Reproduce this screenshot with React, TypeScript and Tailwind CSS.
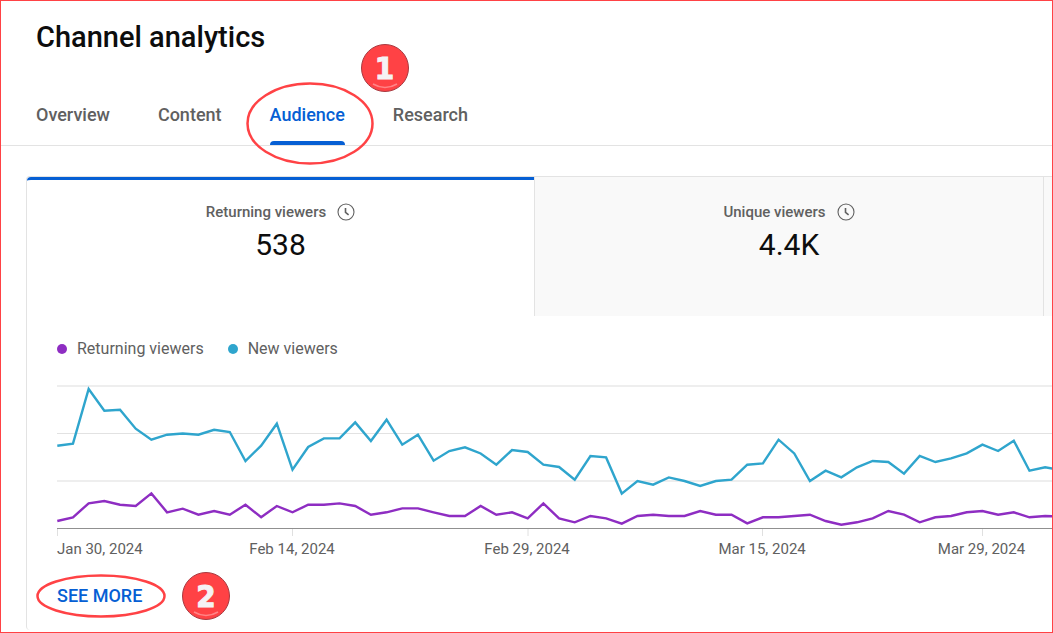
const newViewers = [
  445.8, 443.6, 389, 410.7, 409.7, 428.7, 439.7, 434.7, 433.5, 434.7, 429.8, 432, 461, 445.6, 423.7, 469.7,
  447, 438.4, 438.4, 422.4, 441, 419.7, 444.7, 434.7, 460.7, 451, 447.3, 453.5, 464.7, 450, 452, 464.7,
  467, 479.7, 456, 457.4, 493.6, 481, 484.7, 477.4, 481, 486, 481, 479.7, 464.7, 463.4, 439.7, 453.4,
  481, 470.7, 477.3, 467.3, 461, 462, 473.6, 456, 462, 458.4, 453.4, 444.7, 451, 440.7, 470.7, 467.3, 470,
];

const returningViewers = [
  521, 517.3, 503.3, 501, 504.7, 506, 493.4, 512.3, 508.7, 514.7, 511, 514.7, 504.7, 517.3, 506, 512.3,
  504.7, 504.7, 503.4, 506, 514.7, 512.3, 508.4, 508.4, 512.3, 516, 516, 506, 514.7, 512.3, 518.4, 503.4,
  518.4, 522.3, 516, 518.4, 523.6, 516, 514.7, 516, 516, 511, 514.7, 514.7, 523.4, 517.3, 517.3, 516,
  514.7, 521, 524.7, 522.3, 518.3, 511, 514.7, 522.3, 517.3, 516, 512.3, 511, 514.7, 512.3, 517.3, 516, 516.5,
];

const toPoints = (values: number[]) =>
  values.map((v, i) => `${(0.3 + i * 15.68).toFixed(2)},${(v - 380).toFixed(1)}`).join(" ");

const tabs = ["Overview", "Content", "Audience", "Research"];

function ClockIcon() {
  return (
    <svg width="18" height="18" viewBox="0 0 18 18" fill="none" stroke="#606060" aria-hidden="true">
      <circle cx="9" cy="9" r="8" strokeWidth="1.1" />
      <path d="M8.5 5v4.4l3.1 2.5" strokeWidth="1.6" />
    </svg>
  );
}

function Badge({ label, className }: { label: string; className: string }) {
  return (
    <span
      className={`absolute flex size-12 items-center justify-center rounded-full border border-[#a83a40] bg-[#ff4245] font-['DejaVu_Sans_Condensed','DejaVu_Sans',sans-serif] text-[31px] leading-8 font-bold text-[#f5f3f5] [-webkit-text-stroke:1px_#f5f3f5] ${className}`}
    >
      {label}
      <svg className="absolute bottom-0 left-2" width="30" height="9" viewBox="0 0 30 9" fill="none" aria-hidden="true">
        <path d="M3 2Q15 9 27 2" stroke="#ff8587" strokeWidth="1.5" />
      </svg>
    </span>
  );
}

function Metric({ label, value, selected }: { label: string; value: string; selected?: boolean }) {
  return (
    <button
      type="button"
      className={`flex min-w-0 flex-col items-center pb-[50px] ${
        selected ? "rounded-tl border-t-[3px] border-[#065fd4] pt-5" : "border-l border-[#e3e3e3] bg-[#f9f9f9] pt-[23px]"
      }`}
    >
      <span className="flex h-6 items-center gap-[11px] text-[15px] font-medium text-[#606060]">
        {label}
        <ClockIcon />
      </span>
      <span className="text-[30px] leading-[42px] text-[#0d0d0d]">{value}</span>
    </button>
  );
}

function LegendItem({ label, dot }: { label: string; dot: string }) {
  return (
    <li className="flex items-center gap-2.5">
      <span className={`size-2.5 rounded-full ${dot}`} />
      {label}
    </li>
  );
}

function Chart() {
  return (
    <svg
      className="mt-[19px] block h-[156px] w-full"
      viewBox="0 0 995 156"
      preserveAspectRatio="none"
      fill="none"
      role="img"
      aria-label="Returning and new viewers over time"
    >
      <path d="M0 6H995M0 101H995" stroke="#eeeeee" strokeWidth="2" />
      <path d="M0 53.5H995" stroke="#e2e2e2" />
      <path d="M.5 149v7M235.5 149v7M471 149v7M705.5 149v7M925.5 149v7" stroke="#e0e0e0" />
      <path d="M0 148.5H995" stroke="#909090" />
      <polyline points={toPoints(returningViewers)} stroke="#8e2dc2" strokeWidth="2.4" />
      <polyline points={toPoints(newViewers)} stroke="#2fa5cd" strokeWidth="2.4" />
    </svg>
  );
}

export default function App() {
  return (
    <main className="min-h-screen overflow-hidden border border-[#ff4245] bg-white font-['Roboto',sans-serif]">
      <h1 className="pt-4 pl-[35px] text-[29px] leading-10 font-medium text-[#0d0d0d]">Channel analytics</h1>

      <nav className="mt-[46px] flex gap-12 border-b border-[#e3e3e3] pl-[35px] text-lg leading-6 font-medium text-[#606060]">
        {tabs.map((tab) =>
          tab === "Audience" ? (
            <a key={tab} href="#audience" aria-current="page" className="relative flex flex-col gap-3.5 text-[#065fd4]">
              {tab}
              <span className="h-1 rounded-t bg-[#065fd4]" />
              <svg
                className="absolute -top-[21px] -left-6"
                width="128"
                height="83"
                viewBox="0 0 128 83"
                fill="none"
                aria-hidden="true"
              >
                <ellipse cx="64" cy="41.5" rx="62.5" ry="40" stroke="#ff4245" strokeWidth="2.5" />
              </svg>
              <Badge label="1" className="-top-[59px] left-[91px]" />
            </a>
          ) : (
            <a key={tab} href={`#${tab.toLowerCase()}`}>
              {tab}
            </a>
          ),
        )}
      </nav>

      <section className="mt-[30px] ml-[25px] rounded-l border-t border-l border-[#e3e3e3] pb-[22px]">
        <div className="grid grid-cols-[507fr_509fr_9fr]">
          <Metric label="Returning viewers" value="538" selected />
          <Metric label="Unique viewers" value="4.4K" />
          <div className="border-l border-[#e3e3e3] bg-[#f9f9f9]" />
        </div>

        <div className="pl-[30px] text-[#606060]">
          <ul className="mt-[21px] flex gap-6 text-base leading-6">
            <LegendItem label="Returning viewers" dot="bg-[#8e2dc2]" />
            <LegendItem label="New viewers" dot="bg-[#2fa5cd]" />
          </ul>
          <Chart />
          <div className="mt-px grid grid-cols-[15fr_30fr_30fr_30fr_4fr_18fr] text-center text-[15px] leading-6 whitespace-nowrap">
            <span className="w-0">Jan 30, 2024</span>
            <span>Feb 14, 2024</span>
            <span>Feb 29, 2024</span>
            <span>Mar 15, 2024</span>
            <span className="col-start-6">Mar 29, 2024</span>
          </div>
          <button type="button" className="relative mt-[23px] block text-lg leading-6 font-medium text-[#065fd4]">
            SEE MORE
            <svg
              className="absolute -top-2.5 -left-[21px]"
              width="130"
              height="44"
              viewBox="0 0 130 44"
              fill="none"
              aria-hidden="true"
            >
              <ellipse cx="65" cy="22" rx="63.5" ry="20.5" stroke="#ff4245" strokeWidth="2.5" />
            </svg>
            <Badge label="2" className="-top-3 left-[125px]" />
          </button>
        </div>
      </section>
    </main>
  );
}
